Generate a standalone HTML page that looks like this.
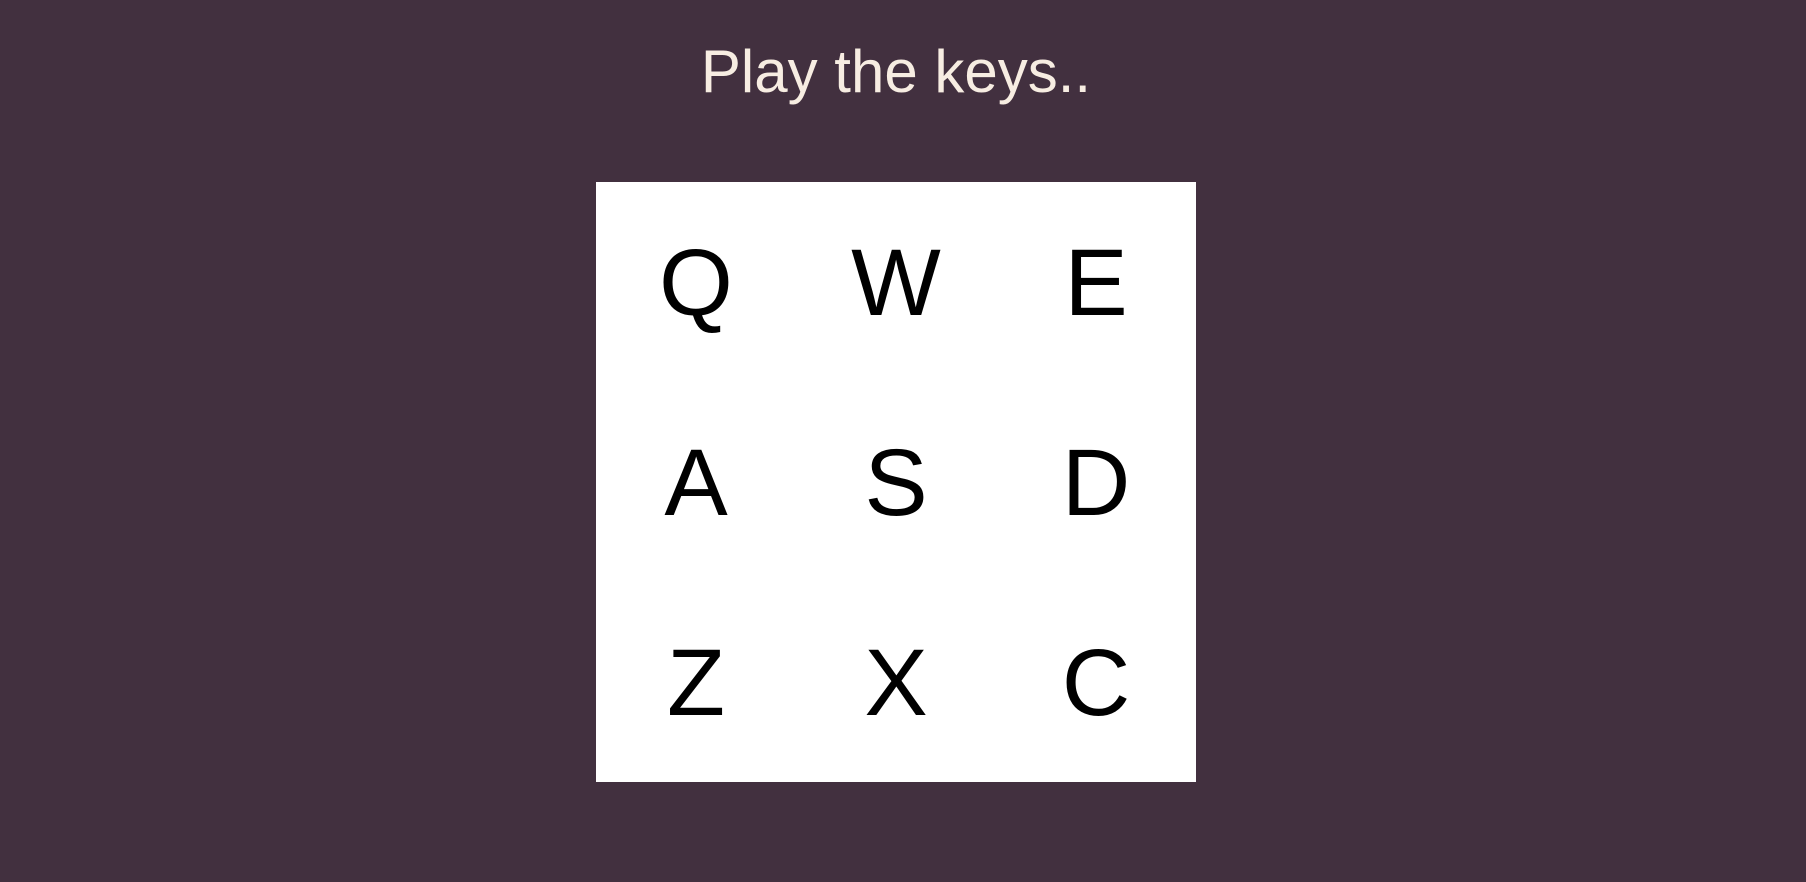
<!DOCTYPE html>
<html><head><meta charset="utf-8"><style>
html,body{margin:0;padding:0;width:1806px;height:882px;background:#42303f;overflow:hidden;font-family:"Liberation Sans",sans-serif;}
.t{position:absolute;left:0;width:1792px;top:42px;text-align:center;font-size:60px;line-height:60px;color:#f7ede2;}
.g{position:absolute;left:596px;top:182px;width:600px;height:600px;background:#fff;display:grid;grid-template-columns:repeat(3,200px);grid-template-rows:repeat(3,200px);}
.g div{display:flex;align-items:center;justify-content:center;font-size:95px;line-height:1;color:#000;padding-top:2px;box-sizing:border-box;}
</style></head><body>
<div class="t">Play the keys..</div>
<div class="g"><div>Q</div><div>W</div><div>E</div><div>A</div><div>S</div><div>D</div><div>Z</div><div>X</div><div>C</div></div>
</body></html>
